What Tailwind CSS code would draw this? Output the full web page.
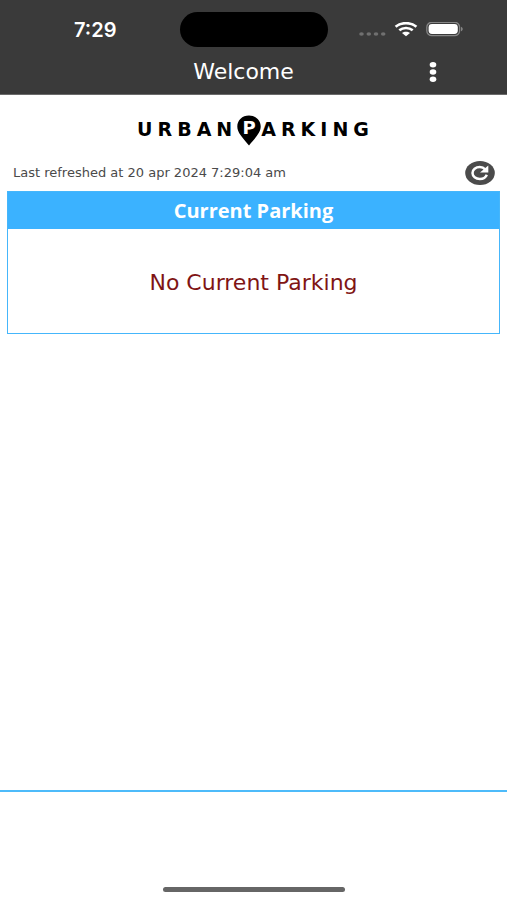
<!DOCTYPE html>
<html lang="en">
<head>
<meta charset="utf-8">
<meta name="viewport" content="width=device-width, initial-scale=1">
<title>Urban Parking</title>
<script src="https://cdn.jsdelivr.net/npm/@tailwindcss/browser@4"></script>
</head>
<body class="flex min-h-screen flex-col bg-white font-['DejaVu_Sans',sans-serif]">
  <header class="border-b border-[#6a6a6a] bg-[#3a3a3a] text-white">
    <div class="grid grid-cols-[1fr_148px_1fr] items-center pt-3">
      <span class="pl-[74px] font-['Inter',sans-serif] text-[20px] leading-6 font-semibold">7:29</span>
      <span class="h-[35px] rounded-full bg-black"></span>
      <div class="flex items-center justify-end pr-11">
        <svg class="mt-2 mr-2 h-1 w-[27px]" viewBox="0 0 27 4" fill="#707070" aria-hidden="true"><ellipse cx="2.5" cy="2" rx="2.3" ry="1.8"/><ellipse cx="9.8" cy="2" rx="2.3" ry="1.8"/><ellipse cx="17" cy="2" rx="2.3" ry="1.8"/><ellipse cx="24.2" cy="2" rx="2.3" ry="1.8"/></svg>
        <svg class="mr-2 h-[15px] w-6" viewBox="0 0 24 15" fill="none" stroke="#fff" stroke-width="2.7" aria-hidden="true"><path d="M1.6 4.8C7.4 0 16.6 0 22.4 4.8"/><path d="M5.3 8.3C9.1 5.2 14.9 5.2 18.7 8.3"/><path d="M8 11C10.2 9.2 13.8 9.2 16 11L12 14.2z" fill="#fff" stroke="none"/></svg>
        <svg class="h-[15px] w-[37px]" viewBox="0 0 37 15" aria-hidden="true"><rect x=".8" y=".3" width="32.8" height="13.4" rx="5" fill="none" stroke="#858585" stroke-width="1.3"/><rect x="2.6" y="2" width="29.2" height="10" rx="3.4" fill="#fff"/><path d="M35 4.7c2.3.8 2.3 3.8 0 4.6z" fill="#858585"/></svg>
      </div>
    </div>
    <div class="flex items-center pt-[5px] pr-[58px] pb-[2px] pl-[70px]">
      <h1 class="flex-1 text-center text-[22px] leading-10">Welcome</h1>
      <button type="button" aria-label="More options" class="flex h-10 w-8 items-center justify-center">
        <svg class="h-5 w-2" viewBox="0 0 8 20" fill="#fff" aria-hidden="true"><ellipse cx="4" cy="2.7" rx="3.3" ry="2.7"/><ellipse cx="4" cy="10" rx="3.3" ry="2.7"/><ellipse cx="4" cy="17.3" rx="3.3" ry="2.7"/></svg>
      </button>
    </div>
  </header>

  <main class="flex flex-1 flex-col px-[7px] pt-5">
    <div class="flex items-start justify-center pl-1 text-[19px] leading-7 font-bold text-black" role="img" aria-label="Urban Parking">
      <span class="tracking-[5px]">URBAN</span>
      <svg class="h-[31px] w-6" viewBox="0 0 24 31" aria-hidden="true"><path d="M12 .5C5.2.5.3 5.3.3 11.5c0 6 4.7 10.5 11.7 19 7-8.5 11.7-13 11.7-19C23.7 5.3 18.8.5 12 .5z"/><text x="12" y="19" text-anchor="middle" font-family="DejaVu Sans" font-weight="700" font-size="18" fill="#fff">P</text></svg>
      <span class="tracking-[5px]">ARKING</span>
    </div>
    <div class="mt-[15px] flex items-center justify-between pr-[5px] pb-[6px] pl-[6px]">
      <p class="text-[13px] leading-6 text-[#4a4a4a]">Last refreshed at 20 apr 2024 7:29:04 am</p>
      <button type="button" aria-label="Refresh">
        <svg class="h-6 w-[30px]" viewBox="0 0 30 24" aria-hidden="true"><ellipse cx="15" cy="12" rx="14.8" ry="12" fill="#4b4b4b"/><path d="M20.2 8.3C18.7 6.7 16.9 6 14.8 6 10.7 6 7.5 8.7 7.5 12s3.2 6 7.3 6c3.3 0 6-1.7 7-4.3" fill="none" stroke="#fff" stroke-width="2.5"/><path d="M23.3 4.5v7h-8.3z" fill="#fff"/></svg>
      </button>
    </div>
    <section class="border border-[#45b6fb]">
      <h2 class="bg-[#3bb2ff] text-center font-['Open_Sans',sans-serif] text-[20px] leading-[37px] font-bold text-white">Current Parking</h2>
      <p class="pt-9 pb-8 text-center text-[22px] leading-9 text-[#801414]">No Current Parking</p>
    </section>
  </main>

  <footer class="flex h-[110px] flex-col items-center justify-end border-t-2 border-[#4dbbfa] pb-2">
    <div class="h-[5px] w-[182px] rounded-full bg-[#666]"></div>
  </footer>
</body>
</html>
